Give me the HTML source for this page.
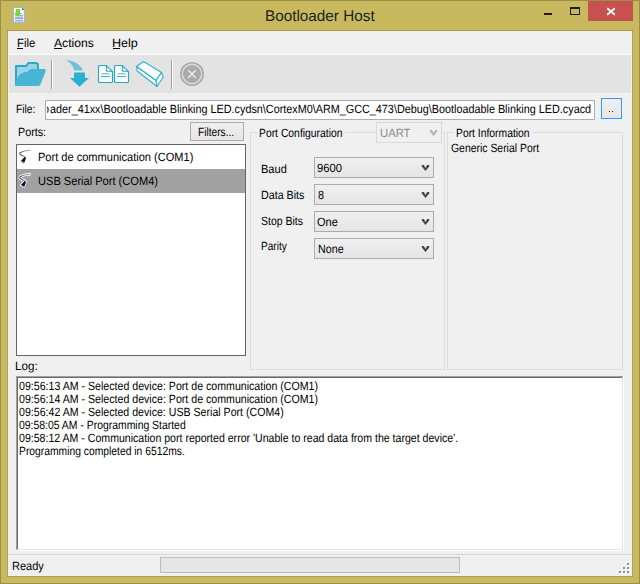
<!DOCTYPE html>
<html><head><meta charset="utf-8"><title>Bootloader Host</title>
<style>
html,body{margin:0;padding:0;}
body{width:640px;height:584px;position:relative;overflow:hidden;background:#c8b95e;font-family:"Liberation Sans",sans-serif;}
.a{position:absolute;box-sizing:border-box;}
.t{position:absolute;white-space:pre;transform-origin:0 0;font-family:"Liberation Sans",sans-serif;text-rendering:geometricPrecision;}
svg{position:absolute;overflow:visible;}
</style></head><body>
<!-- outer frame border -->
<div class="a" style="left:0;top:0;width:640px;height:584px;border:1px solid #9a8e48;"></div>
<!-- inner border -->
<div class="a" style="left:7px;top:30px;width:626px;height:547px;border:1px solid #ada052;background:#f0f0f0;"></div>
<!-- title icon -->
<svg style="left:13px;top:7px" width="12" height="16" viewBox="0 0 12 16">
  <defs><linearGradient id="pg" x1="0" y1="0" x2="1" y2="1"><stop offset="0" stop-color="#ffffff"/><stop offset="1" stop-color="#dfe8f6"/></linearGradient></defs>
  <path d="M0.5 0.5 H9 L11.5 3 V15.5 H0.5 Z" fill="url(#pg)" stroke="#a9b8d0"/>
  <path d="M9 0.5 V3 H11.5 Z" fill="#4a6fb0"/>
  <rect x="2" y="8.2" width="8" height="1" fill="#7e9fd8"/>
  <rect x="2" y="10.3" width="8" height="1.6" fill="#7e9fd8"/>
  <rect x="2" y="13.2" width="8" height="1.1" fill="#7e9fd8"/>
  <path d="M2.7 2 H7.1 V5.9 H8.9 L4.9 9.7 L1.1 5.9 H2.7 Z" fill="#7ad53a"/>
</svg>
<!-- window buttons -->
<div class="a" style="left:544px;top:13px;width:8px;height:2px;background:#1e1e1e;"></div>
<div class="a" style="left:570px;top:7px;width:10px;height:8px;border:1px solid #1e1e1e;border-top-width:2px;"></div>
<div class="a" style="left:588px;top:1px;width:45px;height:20px;background:#c75050;"></div>
<svg style="left:0;top:0" width="640" height="30" viewBox="0 0 640 30">
  <path d="M607.2 8.2 L614.8 14.8 M614.8 8.2 L607.2 14.8" stroke="#fff" stroke-width="1.8"/>
</svg>
<!-- menu bar bottom highlight -->
<div class="a" style="left:8px;top:54px;width:624px;height:1px;background:#fbfbfb;"></div>
<!-- toolbar -->
<div class="a" style="left:9px;top:55px;width:622px;height:38px;background:#e3e3e3;border-radius:2px;"></div>
<!-- underlines for menu mnemonics -->
<div class="a" style="left:17px;top:48px;width:6px;height:1px;background:#000;"></div>
<div class="a" style="left:54px;top:48px;width:8px;height:1px;background:#000;"></div>
<div class="a" style="left:113px;top:48px;width:7px;height:1px;background:#000;"></div>
<!-- toolbar icons -->
<svg style="left:0;top:0" width="640" height="100" viewBox="0 0 640 100">
  <!-- folder -->
  <path d="M16 66 H26.5 L28 63 H36.5 Q38 63 38 64.5 V85 H16 Z" fill="#9ad4e6"/>
  <path d="M16 85.5 V66 H26.3 L28.3 63 H35.5 Q38 63 38 65.5 V70" fill="none" stroke="#2aa9cd" stroke-width="2" stroke-linejoin="round"/>
  <path d="M15 86 L15.4 84.5 C16.2 80 17.6 75.6 21 73.7 C22.6 72.8 24.2 72.3 26.2 72 L27.6 71.7 C29 70 30.2 69 32 69 H44.4 Q46.4 69 45.7 71 L40.6 84.3 Q40 86 38.5 86 Z" fill="#47b6d5"/>
  <!-- separator -->
  <rect x="51" y="60" width="1" height="29" fill="#a0a0a0"/>
  <rect x="52" y="60" width="1" height="29" fill="#ffffff"/>
  <!-- curved arrow -->
  <path d="M65 60 C72 60.3 80.5 63.5 83 70.6 L74.5 70.6 C73 66 70.5 62 65 60 Z" fill="#6ac3dc"/>
  <path d="M74 73.3 Q74 72.5 74.8 72.5 H84.2 Q85 72.5 85 73.3 V78 H89 L79.5 86.8 L70 78 H74 Z" fill="#29b0d1"/>
  <!-- docs -->
  <path d="M98.5 66.3 L99.3 65.5 H106.3 L112.5 71.7 V81.7 L111.7 82.5 H99.3 L98.5 81.7 Z" fill="#fff" stroke="#22a8c8" stroke-width="1.15"/>
  <path d="M106.3 65.5 V70 Q106.3 71.3 107.6 71.3 H112.5" fill="none" stroke="#22a8c8" stroke-width="1.1"/>
  <path d="M101.6 74.5 L102.4 73.8 H108.6 L109.4 74.5" fill="none" stroke="#22a8c8" stroke-width="0.9"/>
  <path d="M101 76.6 H110" stroke="#22a8c8" stroke-width="0.95"/>
  <path d="M114.5 66.3 L115.3 65.5 H122.3 L128.5 71.7 V81.7 L127.7 82.5 H115.3 L114.5 81.7 Z" fill="#fff" stroke="#22a8c8" stroke-width="1.15"/>
  <path d="M122.3 65.5 V70 Q122.3 71.3 123.6 71.3 H128.5" fill="none" stroke="#22a8c8" stroke-width="1.1"/>
  <path d="M117.6 74.5 L118.4 73.8 H124.6 L125.4 74.5" fill="none" stroke="#22a8c8" stroke-width="0.9"/>
  <path d="M117 76.6 H126" stroke="#22a8c8" stroke-width="0.95"/>
  <!-- eraser -->
  <path d="M136.5 66.5 L143.5 61.5 L161.5 72.5 L156 80.5 Z" fill="#fff" stroke="#2ab0d0" stroke-width="1.1" stroke-linejoin="round"/>
  <path d="M136.5 66.5 L137.2 71 L157 86.5 L156 80.5 Z" fill="#fff" stroke="#2ab0d0" stroke-width="1.1" stroke-linejoin="round"/>
  <path d="M156 80.5 L161.5 72.5 L163.3 77 L157 86.5 Z" fill="#fff" stroke="#2ab0d0" stroke-width="1.1" stroke-linejoin="round"/>
  <!-- separator 2 -->
  <rect x="171" y="60" width="1" height="29" fill="#a0a0a0"/>
  <rect x="172" y="60" width="1" height="29" fill="#ffffff"/>
  <!-- cancel -->
  <circle cx="192" cy="74" r="12" fill="#ababab"/>
  <circle cx="192" cy="74" r="9.7" fill="none" stroke="#dcdcdc" stroke-width="1.4"/>
  <path d="M188.3 70.3 L195.7 77.7 M195.7 70.3 L188.3 77.7" stroke="#ececec" stroke-width="1.6"/>
</svg>
<!-- path textbox -->
<div class="a" style="left:45px;top:100px;width:550px;height:20px;border:1px solid #abadb3;background:#fff;"></div>
<div class="a" style="left:47px;top:101px;width:3px;height:18px;overflow:hidden;"><div class="t" style="left:-3.6px;top:2px;font-size:12px;line-height:12px;color:#000;transform:scaleX(0.9013)">o</div></div>
<!-- browse button -->
<div class="a" style="left:601px;top:98px;width:21px;height:21px;border:1px solid #3399ff;background:linear-gradient(#f0f0f0,#e5e5e5);"></div>
<div class="a" style="left:609px;top:111px;width:1px;height:1px;background:#222;"></div>
<div class="a" style="left:612px;top:111px;width:1px;height:1px;background:#222;"></div>
<!-- filters button -->
<div class="a" style="left:190px;top:122px;width:54px;height:19px;border:1px solid #acacac;background:linear-gradient(#f0f0f0,#e5e5e5);"></div>
<!-- ports listbox -->
<div class="a" style="left:16px;top:144px;width:230px;height:212px;border:1px solid #646464;background:#fff;"></div>
<div class="a" style="left:17px;top:169px;width:228px;height:24px;background:#a1a1a1;"></div>
<!-- group box port configuration -->
<div class="a" style="left:250px;top:132px;width:195px;height:238px;border:1px solid #dcdcdc;"></div>
<div class="a" style="left:257px;top:128px;width:88px;height:8px;background:#f0f0f0;"></div>
<!-- UART combo -->
<div class="a" style="left:376px;top:122px;width:66px;height:21px;border:1px solid #d9d9d9;background:#f0f0f0;"></div>
<!-- combos -->
<div class="a" style="left:314px;top:157px;width:120px;height:21px;border:1px solid #acacac;background:linear-gradient(#f0f0f0,#e5e5e5);"></div>
<div class="a" style="left:314px;top:184px;width:120px;height:21px;border:1px solid #acacac;background:linear-gradient(#f0f0f0,#e5e5e5);"></div>
<div class="a" style="left:314px;top:211px;width:120px;height:21px;border:1px solid #acacac;background:linear-gradient(#f0f0f0,#e5e5e5);"></div>
<div class="a" style="left:314px;top:238px;width:120px;height:21px;border:1px solid #acacac;background:linear-gradient(#f0f0f0,#e5e5e5);"></div>
<svg style="left:0;top:0" width="640" height="300" viewBox="0 0 640 300">
  <path d="M429.8 130 H431.9 L433.5 133.1 L435.1 130 H437.2 V131.6 L433.5 136.1 L429.8 131.6 Z" fill="#b4b4b4"/>
  <path d="M421.8 165 H423.9 L425.5 168.1 L427.1 165 H429.2 V166.6 L425.5 171.1 L421.8 166.6 Z" fill="#464646"/>
  <path d="M421.8 192 H423.9 L425.5 195.1 L427.1 192 H429.2 V193.6 L425.5 198.1 L421.8 193.6 Z" fill="#464646"/>
  <path d="M421.8 219 H423.9 L425.5 222.1 L427.1 219 H429.2 V220.6 L425.5 225.1 L421.8 220.6 Z" fill="#464646"/>
  <path d="M421.8 246 H423.9 L425.5 249.1 L427.1 246 H429.2 V247.6 L425.5 252.1 L421.8 247.6 Z" fill="#464646"/>
</svg>
<!-- group box port information -->
<div class="a" style="left:447px;top:132px;width:176px;height:238px;border:1px solid #dcdcdc;"></div>
<div class="a" style="left:454px;top:128px;width:78px;height:8px;background:#f0f0f0;"></div>
<!-- cable icons -->
<svg style="left:0;top:0" width="640" height="200" viewBox="0 0 640 200">
  <defs>
   <linearGradient id="wg" x1="31" y1="0" x2="19" y2="0" gradientUnits="userSpaceOnUse"><stop offset="0" stop-color="#b8c4d0"/><stop offset="0.6" stop-color="#6a7a90"/><stop offset="1" stop-color="#3a4660"/></linearGradient>
  </defs>
    <path d="M31 150.2 C27 150.4 22.5 151 20.2 152.8 C18.8 154.2 21 155.2 23.2 156 C24.6 156.6 25.3 157.2 25 158" fill="none" stroke="url(#wg)" stroke-width="1.1"/>
    <path d="M24.6 156.9 L26.1 157.9 L24.2 162.9 L20.9 161 Z" fill="#0c0c2a"/>
    <path d="M20.9 161 L24.2 162.9 L23.2 164 L20.2 162.2 Z" fill="#c4c8c4"/>
  <g transform="translate(0,24)">
    <path d="M31 150.2 C27 150.4 22.5 151 20.2 152.8 C18.8 154.2 21 155.2 23.2 156 C24.6 156.6 25.3 157.2 25 158" fill="none" stroke="#ffffff" stroke-width="2.6"/>
    <path d="M24.6 156.9 L26.1 157.9 L24.2 162.9 L20.9 161 Z" fill="none" stroke="#fff" stroke-width="1.6"/>
    <path d="M31 150.2 C27 150.4 22.5 151 20.2 152.8 C18.8 154.2 21 155.2 23.2 156 C24.6 156.6 25.3 157.2 25 158" fill="none" stroke="url(#wg)" stroke-width="1.1"/>
    <path d="M24.6 156.9 L26.1 157.9 L24.2 162.9 L20.9 161 Z" fill="#0c0c2a"/>
    <path d="M20.9 161 L24.2 162.9 L23.2 164 L20.2 162.2 Z" fill="#c4c8c4"/>
  </g>
</svg>
<!-- log textbox -->
<div class="a" style="left:16px;top:376px;width:608px;height:175px;background:#fff;"></div>
<div class="a" style="left:16px;top:376px;width:607px;height:1px;background:#a0a0a0;"></div>
<div class="a" style="left:16px;top:376px;width:1px;height:174px;background:#a0a0a0;"></div>
<div class="a" style="left:17px;top:377px;width:605px;height:1px;background:#696969;"></div>
<div class="a" style="left:17px;top:377px;width:1px;height:172px;background:#696969;"></div>
<div class="a" style="left:622px;top:377px;width:1px;height:173px;background:#e3e3e3;"></div>
<div class="a" style="left:17px;top:549px;width:606px;height:1px;background:#e3e3e3;"></div>
<!-- status bar -->
<div class="a" style="left:8px;top:554px;width:623px;height:1px;background:#d7d7d7;"></div>
<div class="a" style="left:160px;top:557px;width:300px;height:16px;border:1px solid #bcbcbc;background:#e6e6e6;"></div>
<!-- grip -->
<div class="a" style="left:628px;top:564px;width:2px;height:2px;background:#fff;"></div>
<div class="a" style="left:624px;top:568px;width:2px;height:2px;background:#fff;"></div>
<div class="a" style="left:628px;top:568px;width:2px;height:2px;background:#fff;"></div>
<div class="a" style="left:620px;top:572px;width:2px;height:2px;background:#fff;"></div>
<div class="a" style="left:624px;top:572px;width:2px;height:2px;background:#fff;"></div>
<div class="a" style="left:628px;top:572px;width:2px;height:2px;background:#fff;"></div>
<div class="a" style="left:627px;top:563px;width:2px;height:2px;background:#8e8e8e;"></div>
<div class="a" style="left:623px;top:567px;width:2px;height:2px;background:#8e8e8e;"></div>
<div class="a" style="left:627px;top:567px;width:2px;height:2px;background:#8e8e8e;"></div>
<div class="a" style="left:619px;top:571px;width:2px;height:2px;background:#8e8e8e;"></div>
<div class="a" style="left:623px;top:571px;width:2px;height:2px;background:#8e8e8e;"></div>
<div class="a" style="left:627px;top:571px;width:2px;height:2px;background:#8e8e8e;"></div>
<div class="t" style="left:265.21px;top:9px;font-size:15.5px;line-height:15.5px;color:#1f1f1f;transform:scaleX(0.9864);">Bootloader Host</div>
<div class="t" style="left:16.76px;top:37px;font-size:12px;line-height:12px;color:#000;transform:scaleX(0.9444);">File</div>
<div class="t" style="left:54.30px;top:37px;font-size:12px;line-height:12px;color:#000;transform:scaleX(1.0115);">Actions</div>
<div class="t" style="left:112.25px;top:37px;font-size:12px;line-height:12px;color:#000;transform:scaleX(1.0478);">Help</div>
<div class="t" style="left:15.55px;top:103px;font-size:12px;line-height:12px;color:#000;transform:scaleX(0.8476);">File:</div>
<div class="t" style="left:49.70px;top:103px;font-size:12px;line-height:12px;color:#000;transform:scaleX(0.9013);">ader_41xx\Bootloadable Blinking LED.cydsn\CortexM0\ARM_GCC_473\Debug\Bootloadable Blinking LED.cyacd</div>
<div class="t" style="left:18.35px;top:126px;font-size:12px;line-height:12px;color:#000;transform:scaleX(0.8966);">Ports:</div>
<div class="t" style="left:197.75px;top:126px;font-size:12px;line-height:12px;color:#000;transform:scaleX(0.8463);">Filters...</div>
<div class="t" style="left:38.08px;top:151px;font-size:12px;line-height:12px;color:#000;transform:scaleX(0.9207);">Port de communication (COM1)</div>
<div class="t" style="left:38.08px;top:175px;font-size:12px;line-height:12px;color:#000;transform:scaleX(0.9227);">USB Serial Port (COM4)</div>
<div class="t" style="left:258.84px;top:127px;font-size:12px;line-height:12px;color:#000;transform:scaleX(0.8632);">Port Configuration</div>
<div class="t" style="left:379.66px;top:127px;font-size:12px;line-height:12px;color:#8c8c8c;transform:scaleX(0.9403);">UART</div>
<div class="t" style="left:261.38px;top:163px;font-size:12px;line-height:12px;color:#000;transform:scaleX(0.9212);">Baud</div>
<div class="t" style="left:261.41px;top:189px;font-size:12px;line-height:12px;color:#000;transform:scaleX(0.8915);">Data Bits</div>
<div class="t" style="left:261.43px;top:215px;font-size:12px;line-height:12px;color:#000;transform:scaleX(0.8745);">Stop Bits</div>
<div class="t" style="left:261.46px;top:240px;font-size:12px;line-height:12px;color:#000;transform:scaleX(0.8400);">Parity</div>
<div class="t" style="left:317.36px;top:162px;font-size:12px;line-height:12px;color:#000;transform:scaleX(0.9360);">9600</div>
<div class="t" style="left:318.30px;top:189px;font-size:12px;line-height:12px;color:#000;transform:scaleX(0.9000);">8</div>
<div class="t" style="left:316.98px;top:216px;font-size:12px;line-height:12px;color:#000;transform:scaleX(0.9190);">One</div>
<div class="t" style="left:317.91px;top:243px;font-size:12px;line-height:12px;color:#000;transform:scaleX(0.8926);">None</div>
<div class="t" style="left:455.64px;top:127px;font-size:12px;line-height:12px;color:#000;transform:scaleX(0.8619);">Port Information</div>
<div class="t" style="left:451.03px;top:142px;font-size:12px;line-height:12px;color:#000;transform:scaleX(0.8685);">Generic Serial Port</div>
<div class="t" style="left:15.28px;top:360px;font-size:12px;line-height:12px;color:#000;transform:scaleX(0.9690);">Log:</div>
<div class="t" style="left:11.78px;top:560px;font-size:12px;line-height:12px;color:#000;transform:scaleX(0.9176);">Ready</div>
<div class="t" style="left:19.00px;top:380px;font-size:12px;line-height:12px;color:#000;transform:scaleX(0.8843);">09:56:13 AM - Selected device: Port de communication (COM1)</div>
<div class="t" style="left:19.00px;top:393px;font-size:12px;line-height:12px;color:#000;transform:scaleX(0.8843);">09:56:14 AM - Selected device: Port de communication (COM1)</div>
<div class="t" style="left:19.00px;top:406px;font-size:12px;line-height:12px;color:#000;transform:scaleX(0.8839);">09:56:42 AM - Selected device: USB Serial Port (COM4)</div>
<div class="t" style="left:19.00px;top:419px;font-size:12px;line-height:12px;color:#000;transform:scaleX(0.8677);">09:58:05 AM - Programming Started</div>
<div class="t" style="left:19.00px;top:432px;font-size:12px;line-height:12px;color:#000;transform:scaleX(0.8815);">09:58:12 AM - Communication port reported error 'Unable to read data from the target device'.</div>
<div class="t" style="left:18.84px;top:445px;font-size:12px;line-height:12px;color:#000;transform:scaleX(0.8602);">Programming completed in 6512ms.</div>
</body></html>
